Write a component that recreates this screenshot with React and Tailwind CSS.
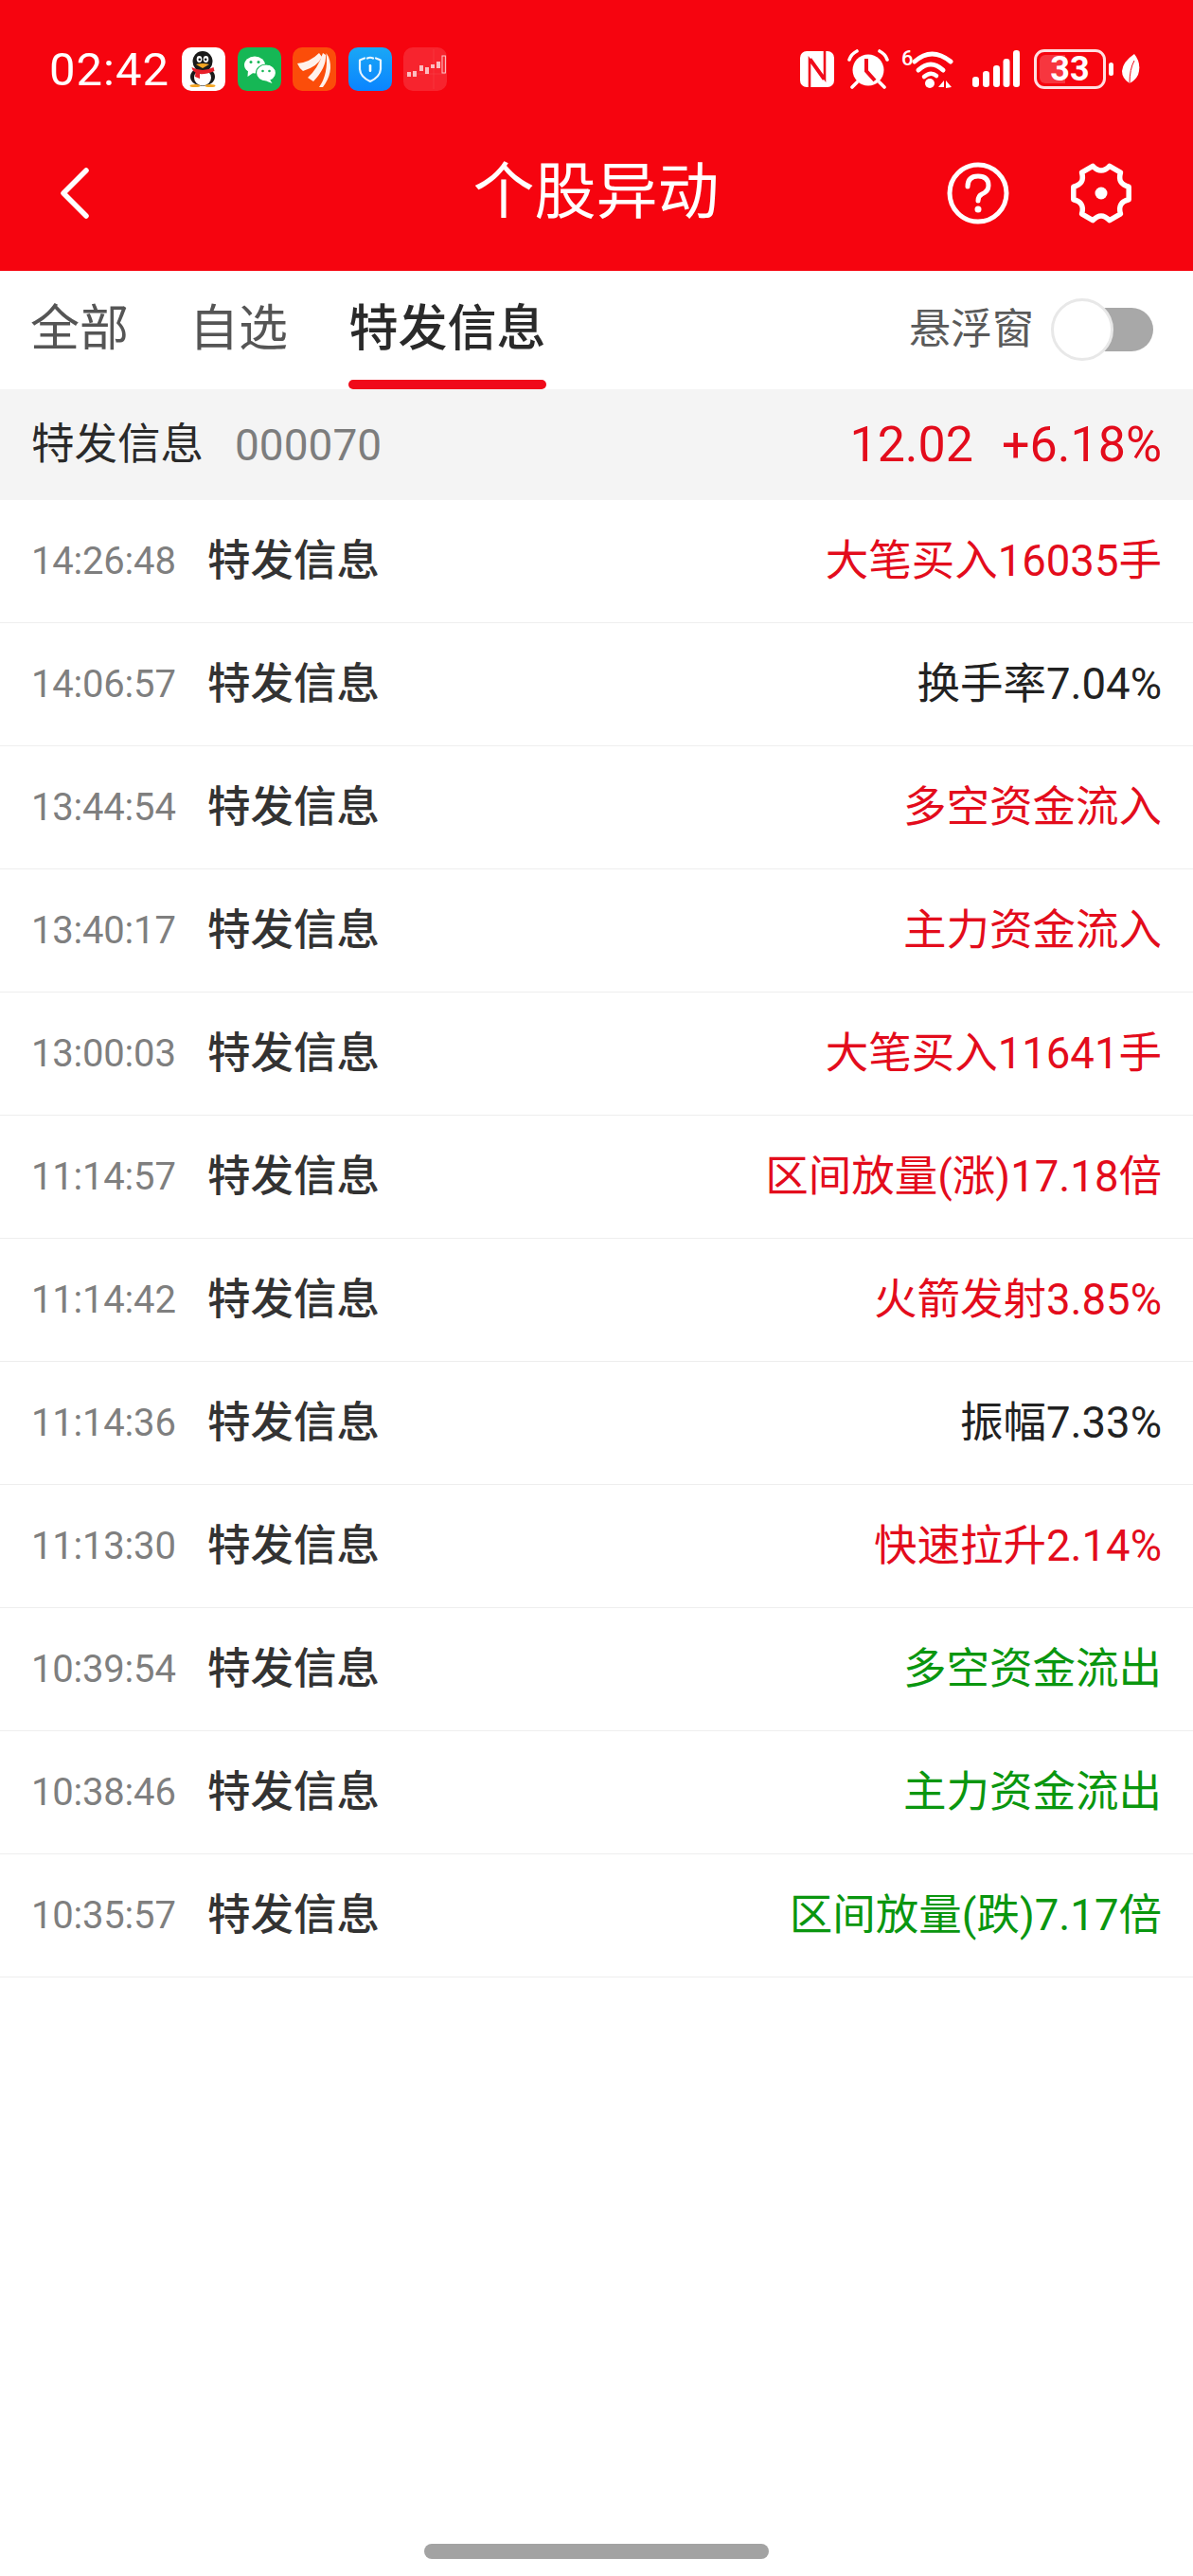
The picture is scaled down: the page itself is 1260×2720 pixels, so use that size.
const rows = [
  ["14:26:48", "大笔买入16035手", "red"],
  ["14:06:57", "换手率7.04%", "black"],
  ["13:44:54", "多空资金流入", "red"],
  ["13:40:17", "主力资金流入", "red"],
  ["13:00:03", "大笔买入11641手", "red"],
  ["11:14:57", "区间放量(涨)17.18倍", "red"],
  ["11:14:42", "火箭发射3.85%", "red"],
  ["11:14:36", "振幅7.33%", "black"],
  ["11:13:30", "快速拉升2.14%", "red"],
  ["10:39:54", "多空资金流出", "green"],
  ["10:38:46", "主力资金流出", "green"],
  ["10:35:57", "区间放量(跌)7.17倍", "green"],
];

const colors = {
  red: "text-[#e30c1c]",
  black: "text-[#222222]",
  green: "text-[#0a960f]",
};

function QQIcon() {
  return (
    <svg width="46" height="46" viewBox="0 0 46 46" className="shrink-0">
      <rect width="46" height="46" rx="10" fill="#fff" />
      <ellipse cx="22" cy="31" rx="13" ry="10" fill="#1a1a1a" />
      <ellipse cx="22" cy="32" rx="9" ry="8.5" fill="#fff" />
      <ellipse cx="22" cy="15" rx="10.5" ry="11" fill="#1a1a1a" />
      <ellipse cx="18.5" cy="12.500" rx="2.8" ry="3.4" fill="#fff" />
      <ellipse cx="25.5" cy="12.500" rx="2.8" ry="3.4" fill="#fff" />
      <circle cx="18.8" cy="12.800" r="1.3" fill="#111" />
      <circle cx="25.2" cy="12.800" r="1.3" fill="#111" />
      <path d="M15 18 Q22 16 29 18 L22 22Z" fill="#f5a623" />
      <path d="M10.500 21 Q22 27 33.500 21 L34.500 25 Q24 29 19 28 L19 33 L14 31 L14.500 26.500 Q11 25 10.500 21Z" fill="#e8202a" />
      <ellipse cx="14" cy="40.500" rx="5.500" ry="1.600" fill="#f5a623" />
      <ellipse cx="30" cy="40.500" rx="5.500" ry="1.600" fill="#f5a623" />
    </svg>
  );
}

function WechatIcon() {
  return (
    <svg width="46" height="46" viewBox="0 0 46 46" className="shrink-0">
      <rect width="46" height="46" rx="10" fill="#16b755" />
      <ellipse cx="18" cy="18.500" rx="11" ry="9" fill="#fff" />
      <path d="M11 24 L10.500 31 L17 26.500Z" fill="#fff" />
      <ellipse cx="30" cy="27" rx="10.500" ry="9" fill="#fff" stroke="#16b755" strokeWidth="1.2" />
      <path d="M34 34 L36.500 38 L30 35.500Z" fill="#fff" />
      <circle cx="14" cy="15.500" r="1.500" fill="#16b755" />
      <circle cx="22" cy="15.500" r="1.500" fill="#16b755" />
      <circle cx="26.500" cy="25" r="1.300" fill="#16b755" />
      <circle cx="33.500" cy="25" r="1.300" fill="#16b755" />
    </svg>
  );
}

function FlameIcon() {
  return (
    <svg width="46" height="46" viewBox="0 0 46 46" className="shrink-0">
      <rect width="46" height="46" rx="10" fill="#fb4d0a" />
      <path d="M5 17 Q18 16 28 6 L31 10 Q27 20 11 25 Q7 22 5 17Z" fill="#fff" opacity="0.92" />
      <path d="M16 32 Q27 22 32 6 L35 8 Q36 21 22 36Z" fill="#fff" opacity="0.92" />
      <path d="M28 42 Q38 28 35.500 6 L38 10 Q44 26 32 42Z" fill="#fff" opacity="0.92" />
    </svg>
  );
}

function ShieldIcon() {
  return (
    <svg width="46" height="46" viewBox="0 0 46 46" className="shrink-0">
      <defs>
        <linearGradient id="shieldBg" x1="0" y1="0" x2="0" y2="1">
          <stop offset="0" stopColor="#1aa7f5" />
          <stop offset="1" stopColor="#0a84ff" />
        </linearGradient>
      </defs>
      <rect width="46" height="46" rx="10" fill="url(#shieldBg)" />
      <path d="M17 11.500 L12 13.500 V23 Q12.500 31 23 36 Q33.500 31 34 23 V13.500 L29 11.500" fill="none" stroke="#fff" strokeWidth="2.2" strokeLinecap="round" strokeLinejoin="round" opacity="0.9" />
      <path d="M20 11.500 Q23 10 26 11.500" fill="none" stroke="#fff" strokeWidth="2.2" strokeLinecap="round" opacity="0.9" />
      <rect x="21.700" y="18" width="2.600" height="8" rx="1.300" fill="#fff" />
    </svg>
  );
}

function CandleIcon() {
  return (
    <svg width="46" height="46" viewBox="0 0 46 46" className="shrink-0">
      <rect width="46" height="46" rx="10" fill="#fff" opacity="0.13" />
      <path d="M2 28 H44 M32 2 V44" stroke="#fff" strokeWidth="0.5" opacity="0.15" />
      <g fill="#fff" opacity="0.7">
        <rect x="4" y="26" width="4" height="5" />
        <rect x="10" y="25" width="4" height="6" />
        <rect x="17" y="19" width="4" height="6" />
        <rect x="23" y="21" width="4" height="7" />
        <rect x="29" y="18" width="4" height="4" />
        <rect x="35" y="15" width="4" height="7" />
      </g>
      <rect x="41" y="9" width="3.400" height="18" fill="none" stroke="#fff" strokeWidth="1" opacity="0.75" />
    </svg>
  );
}

function StatusIcons() {
  return (
    <div className="flex items-center text-white">
      {/* nfc */}
      <svg width="36" height="38" viewBox="0 0 36 38">
        <rect width="36" height="38" rx="7" fill="#fff" />
        <path d="M10 38 V9 L25 30" fill="none" stroke="#f00a1a" strokeWidth="2.600" />
        <path d="M26 0 V29 L11 8" fill="none" stroke="#f00a1a" strokeWidth="2.600" />
      </svg>
      {/* alarm */}
      <svg width="44" height="42" viewBox="0 0 44 42" className="ml-[14px]">
        <circle cx="22" cy="22" r="16.500" fill="#fff" />
        <path d="M20 10 V23 L29 33" fill="none" stroke="#f00a1a" strokeWidth="4" />
        <path d="M2 11 Q4 5 10 2 M42 11 Q40 5 34 2" fill="none" stroke="#fff" strokeWidth="3.600" strokeLinecap="round" />
        <path d="M10 35 L5 40 M34 35 L39 40" stroke="#fff" strokeWidth="3.600" strokeLinecap="round" />
      </svg>
      {/* wifi */}
      <div className="relative ml-[13px] h-[42px] w-[56px]">
        <svg width="56" height="42" viewBox="0 0 56 42">
          <path d="M14 13 Q32 -3 52 13" fill="none" stroke="#fff" strokeWidth="5" strokeLinecap="round" />
          <path d="M18 22 Q31 10 44 22" fill="none" stroke="#fff" strokeWidth="5" strokeLinecap="round" />
          <path d="M24 29 Q31 23 37 28" fill="none" stroke="#fff" strokeWidth="4.500" strokeLinecap="round" />
          <circle cx="30" cy="36" r="5" fill="#fff" />
          <path d="M45 33 V40 H39Z M47 41 V33 L53 40Z" fill="#fff" />
        </svg>
        <span className="absolute left-0 top-0 text-[22px] leading-[20px] font-medium">6</span>
      </div>
      {/* signal */}
      <svg width="50" height="40" viewBox="0 0 50 40" className="ml-[19px]">
        <rect x="0" y="28" width="7" height="11" rx="3.200" fill="#fff" />
        <rect x="11" y="22" width="7" height="17" rx="3.200" fill="#fff" />
        <rect x="22" y="16" width="7" height="23" rx="3.200" fill="#fff" />
        <rect x="32.500" y="9" width="7" height="30" rx="3.200" fill="#fff" />
        <rect x="43" y="0" width="7" height="39" rx="3.200" fill="#fff" />
      </svg>
      {/* battery */}
      <div className="ml-[15px] flex items-center">
        <div className="relative flex h-[42px] w-[76px] items-center justify-center overflow-hidden rounded-[11px] border-[3px] border-[#ffdfe2]">
          <div className="absolute inset-y-[3px] left-[3px] w-[27px] rounded-l-[6px] bg-white/20" />
          <span className="relative font-['Roboto',sans-serif] text-[36px] leading-none font-bold text-white">33</span>
        </div>
        <div className="ml-[3px] h-[14px] w-[5px] rounded-full bg-white" />
      </div>
      {/* leaf */}
      <svg width="20" height="32" viewBox="0 0 20 32" className="ml-[8px]">
        <path d="M14 0 Q22 10 18 22 Q15 28 9 31 Q1 26 1 18 Q2 8 14 0Z" fill="#fff" />
        <path d="M14 7 Q9 16 9 31" fill="none" stroke="#f00a1a" strokeWidth="1" />
      </svg>
    </div>
  );
}

export default function App() {
  return (
    <div className="flex h-[2720px] w-[1260px] flex-col overflow-hidden bg-white font-['Roboto','Noto_Sans_CJK_SC',sans-serif]">
      <div className="h-[286px] shrink-0 bg-[#f6040f] pl-[52px] pr-[56px] text-white">
        <div className="flex h-[126px] items-center justify-between pt-[20px]">
          <div className="flex items-center">
            <span className="w-[140px] text-[49px] leading-none tracking-[1px]">02:42</span>
            <div className="flex gap-[12.500px]">
              <QQIcon />
              <WechatIcon />
              <FlameIcon />
              <ShieldIcon />
              <CandleIcon />
            </div>
          </div>
          <StatusIcons />
        </div>
        <div className="relative flex h-[154px] items-center justify-center">
          <svg width="34" height="54" viewBox="0 0 34 54" className="absolute left-[10px] top-[51px]">
            <path d="M29 3 L5 27 L29 51" fill="none" stroke="#fff" strokeWidth="5.500" strokeLinecap="round" strokeLinejoin="round" />
          </svg>
          <span className="ml-[3px] text-[65px] leading-none">个股异动</span>
          <svg width="66" height="66" viewBox="0 0 66 66" className="absolute left-[948px] top-[45px]">
            <circle cx="33" cy="33" r="30" fill="none" stroke="#fff" strokeWidth="5" />
            <path d="M22 26 Q22 15 33 15 Q44 15 44 25 Q44 31 37 34 Q33 36 33 41" fill="none" stroke="#fff" strokeWidth="5" strokeLinecap="round" />
            <circle cx="33" cy="50" r="3.500" fill="#fff" />
          </svg>
          <svg width="66" height="66" viewBox="0 0 66 66" className="absolute left-[1078px] top-[45px]">
            <path d="M41.800 4.300 L53.500 11.100 Q49.750 23.300 62.200 26.250 L62.200 39.750 Q49.750 42.700 53.500 54.900 L41.800 61.700 Q33 52.300 24.200 61.700 L12.500 54.900 Q16.250 42.700 3.800 39.750 L3.800 26.250 Q16.250 23.300 12.500 11.100 L24.200 4.300 Q33 13.700 41.800 4.300Z" fill="none" stroke="#fff" strokeWidth="5.500" strokeLinejoin="round" />
            <circle cx="33" cy="33" r="6.500" fill="#fff" />
          </svg>
        </div>
      </div>

      <div className="flex h-[125px] shrink-0 items-start pl-[32px] pr-[42px] pt-[20px]">
        <span className="mt-[9px] text-[52px] leading-[66px] text-[#555555]">全部</span>
        <span className="ml-[64px] mt-[9px] text-[52px] leading-[66px] text-[#555555]">自选</span>
        <div className="ml-[64px] mt-[9px] flex w-[209px] flex-col items-center">
          <span className="text-[52px] leading-[66px] font-medium text-[#2a2a2a]">特发信息</span>
          <div className="mt-[20px] h-[10px] w-[209px] rounded-full bg-[#f00a1a]" />
        </div>
        <div className="ml-auto mt-[17px] flex items-center">
          <span className="text-[44px] leading-[50px] text-[#5a5a5a]">悬浮窗</span>
          <div className="relative ml-[51px] h-[46px] w-[75px] rounded-r-full bg-[#a8a8a8]">
            <div className="absolute left-[-33px] top-[-10px] h-[66px] w-[66px] rounded-full border-[3px] border-[#e8e8e8] bg-white" />
          </div>
        </div>
      </div>

      <div className="flex h-[117px] shrink-0 items-center bg-[#f4f4f4] pl-[33px] pr-[33px]">
        <span className="text-[45.500px] leading-none text-[#2a2a2a]">特发信息</span>
        <span className="ml-[33px] text-[46px] leading-none text-[#7d7d7d]">000070</span>
        <span className="ml-auto text-[52px] leading-none text-[#e30c1c]">12.02</span>
        <span className="ml-[30px] text-[52px] leading-none text-[#e30c1c]">+6.18%</span>
      </div>

      {rows.map((row) => (
        <div key={row[0]} className="flex h-[130px] shrink-0 items-center border-b border-[#eeeeee] pl-[33px] pr-[33px] pt-[1px]">
          <span className="w-[186px] text-[40px] leading-none tracking-[-0.2px] text-[#7f7f7f]">{row[0]}</span>
          <span className="text-[45.500px] leading-none font-medium text-[#333333]">特发信息</span>
          <span className={"ml-auto text-[45.500px] leading-none " + colors[row[2]]}>{row[1]}</span>
        </div>
      ))}

      <div className="mt-auto mb-[18px] flex justify-center">
        <div className="h-[16px] w-[364px] rounded-full bg-[#a3a3a3]" />
      </div>
    </div>
  );
}
